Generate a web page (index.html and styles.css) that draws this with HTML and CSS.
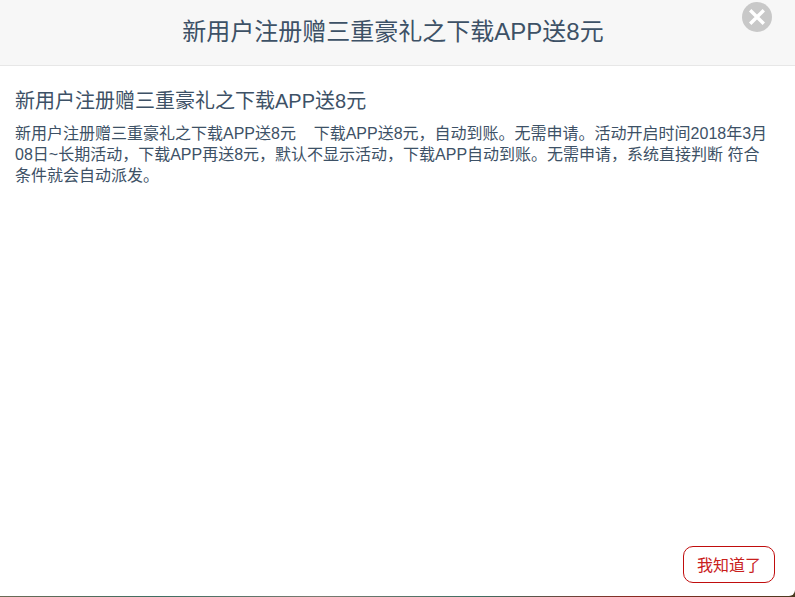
FILE: index.html
```html
<!DOCTYPE html>
<html lang="zh-CN">
<head>
    <meta charset="utf-8">
    <meta name="viewport" content="width=device-width, initial-scale=1">
    <title>活动详情</title>
    <link rel="stylesheet" href="styles.css">
</head>
<body>
    <div class="modal">
        <div class="modal-head">
            <h3 class="modal-title">新用户注册赠三重豪礼之下载APP送8元</h3>
            <span class="modal-close">
                <svg width="30" height="30" viewBox="0 0 30 30">
                    <circle cx="15" cy="15" r="15" fill="#c8c8c8"/>
                    <path d="M8.2 8.2 L21.8 21.8 M21.8 8.2 L8.2 21.8" stroke="#fff" stroke-width="3.4" fill="none"/>
                </svg>
            </span>
        </div>
        <div class="modal-body">
            <h4 class="notice-title">新用户注册赠三重豪礼之下载APP送8元</h4>
            <p class="notice-text">新用户注册赠三重豪礼之下载APP送8元&nbsp;&nbsp;&nbsp;&nbsp;下载APP送8元，自动到账。无需申请。活动开启时间2018年3月08日~长期活动，下载APP再送8元，默认不显示活动，下载APP自动到账。无需申请，系统直接判断 符合条件就会自动派发。</p>
        </div>
        <div class="modal-foot">
            <button class="btn-ok">我知道了</button>
        </div>
    </div>
</body>
</html>
```

FILE: styles.css
```css
* {
    box-sizing: border-box;
}
html, body {
    height: 100%;
    margin: 0;
    overflow: hidden;
}
body {
    font-family: "Liberation Sans", "Noto Sans CJK SC", sans-serif;
    color: #3d5166;
    background: linear-gradient(90deg, #6b6a55, #3f6e62 20%, #7a7a70 40%, #3f6e62 60%, #8a2a20 80%, #4a3a20);
}
.modal {
    height: 596px;
    background: #fff;
    border-bottom-right-radius: 6px;
    display: flex;
    flex-direction: column;
}
.modal-head {
    height: 66px;
    flex-shrink: 0;
    position: relative;
    padding: 0 9px 6px 0;
    background: #f7f7f7;
    border-bottom: 1px solid #e7e7e7;
    display: flex;
    justify-content: center;
    align-items: center;
}
.modal-title {
    margin: 0;
    font-size: 24px;
    font-weight: normal;
}
.modal-close {
    position: absolute;
    top: 2px;
    right: 23px;
    line-height: 0;
}
.modal-body {
    flex: 1;
    padding: 23px 25px 0 15px;
}
.notice-title {
    margin: 0 0 10px;
    font-size: 20px;
    font-weight: normal;
    line-height: 24px;
}
.notice-text {
    margin: 0;
    font-size: 16px;
    line-height: 21px;
}
.modal-foot {
    display: flex;
    justify-content: flex-end;
    padding: 0 20px 13px;
}
.btn-ok {
    width: 92px;
    height: 37px;
    padding: 0 0 2px;
    font: inherit;
    font-size: 16px;
    color: #c9201c;
    background: #fff;
    border: 1px solid #c00d0d;
    border-radius: 10px;
}
```
